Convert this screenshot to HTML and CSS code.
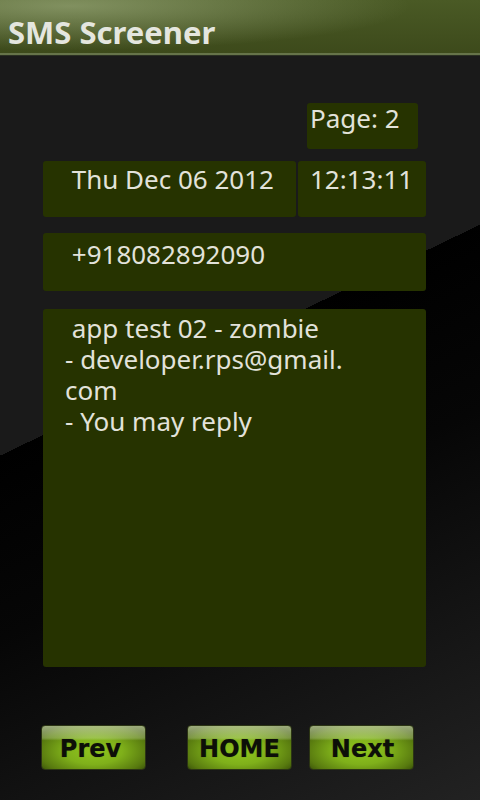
FILE: index.html
```html
<!DOCTYPE html>
<html>
<head>
<meta charset="utf-8">
<link rel="stylesheet" href="styles.css">
</head>
<body>
<header class="titlebar"><span class="title">SMS Screener</span></header>
<main class="content">
  <div class="page-row"><div class="box page">Page: 2</div></div>
  <div class="date-row">
    <div class="box date"> Thu Dec 06 2012</div>
    <div class="box time">12:13:11</div>
  </div>
  <div class="box phone"> +918082892090</div>
  <div class="box message"><span class="line"> app test 02 - zombie</span><span class="line">- developer.rps@gmail.</span><span class="line">com</span><span class="line">- You may reply</span></div>
  <div class="buttons">
    <button class="btn btn-prev">Prev</button>
    <button class="btn btn-home">HOME</button>
    <button class="btn btn-next">Next</button>
  </div>
</main>
</body>
</html>
```
FILE: styles.css
```css
html, body {
  margin: 0;
  padding: 0;
  width: 480px;
  height: 800px;
  overflow: hidden;
}
body {
  font-family: "Noto Sans", "Open Sans", sans-serif;
  color: #e2e2da;
  background:
    linear-gradient(154.3deg, #1a1a1a 0, #1a1a1a 44.2%, rgba(0,0,0,0) 44.2%),
    linear-gradient(154.3deg, #000 44%, #060606 62%, #222 100%);
}
.titlebar {
  height: 53px;
  border-bottom: 2px solid #66744a;
  box-shadow: 0 1px 0 #2a2f22;
  background:
    radial-gradient(ellipse 340px 44px at 70px 6px, rgba(185,200,155,0.5) 0%, rgba(185,200,155,0.2) 60%, rgba(185,200,155,0) 100%),
    linear-gradient(to bottom, #4a5a25 0%, #3d4a1b 100%);
  display: flex;
  align-items: flex-end;
  padding-left: 8px;
}
.title {
  font-family: "Noto Sans", "Open Sans", sans-serif;
  font-weight: bold;
  font-size: 31px;
  line-height: 1;
  color: #e4e6df;
  padding-bottom: 5px;
}
.content {
  padding: 48px 54px 0 43px;
  display: flex;
  flex-direction: column;
}
.box {
  background: #263300;
  border-radius: 3px;
  font-size: 26px;
  line-height: 30px;
  white-space: pre;
}
.page-row {
  display: flex;
  justify-content: flex-end;
  padding-right: 8px;
}
.page {
  width: 108px;
  height: 46px;
  padding-left: 3px;
}
.date-row {
  display: flex;
  gap: 2px;
  margin-top: 12px;
}
.date {
  width: 253px;
  padding: 3px 0 0 22px;
  box-sizing: border-box;
  height: 56px;
}
.time {
  flex: 1;
  height: 56px;
  box-sizing: border-box;
  padding: 3px 0 0 12px;
}
.phone {
  margin-top: 16px;
  height: 58px;
  box-sizing: border-box;
  padding: 6px 0 0 22px;
}
.message {
  margin-top: 18px;
  height: 358px;
  box-sizing: border-box;
  padding: 4px 0 0 22px;
  line-height: 31px;
  display: flex;
  flex-direction: column;
}
.buttons {
  display: flex;
  margin: 58px 0 0 -2px;
}
.btn {
  width: 105px;
  height: 45px;
  border: 1px solid #2c3514;
  border-radius: 4px;
  padding: 0;
  font-family: "DejaVu Sans", sans-serif;
  font-weight: bold;
  font-size: 24px;
  color: #0d0f08;
  text-shadow: 0 0 1px rgba(0,0,0,0.4);
  background:
    linear-gradient(to bottom, rgba(235,240,220,0.55) 0, rgba(220,235,190,0.3) 28%, rgba(255,255,255,0) 34%),
    radial-gradient(ellipse 62% 70% at 50% 58%, #90c51f 0%, #7fb01a 45%, #587a0f 85%, #3f590a 100%);
  box-sizing: border-box;
  display: flex;
  align-items: center;
  justify-content: center;
  padding-right: 6px;
  padding-top: 2px;
}
.btn-home {
  margin-left: 41px;
  padding-right: 0;
}
.btn-next {
  margin-left: 17px;
  padding-right: 0;
  padding-left: 2px;
}
```
